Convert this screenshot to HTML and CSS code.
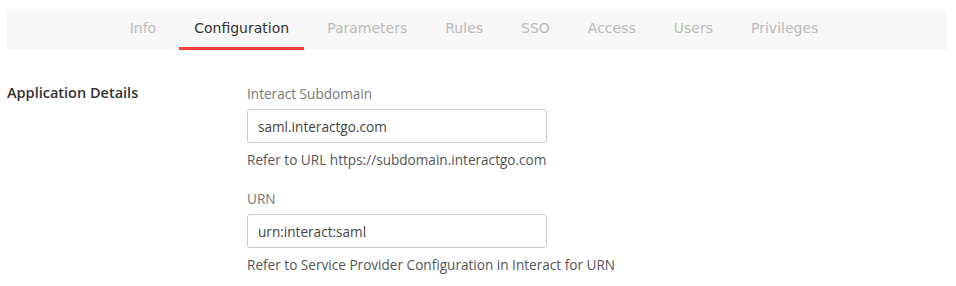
FILE: index.html
```html
<!DOCTYPE html>
<html lang="en">
<head>
    <meta charset="UTF-8">
    <meta name="viewport" content="width=device-width, initial-scale=1.0">
    <title>Application Configuration</title>
    <link rel="stylesheet" href="styles.css">
</head>
<body>
    <div class="page">
        <nav class="tabs">
            <a href="#" class="tab">Info</a>
            <a href="#" class="tab active">Configuration</a>
            <a href="#" class="tab">Parameters</a>
            <a href="#" class="tab">Rules</a>
            <a href="#" class="tab">SSO</a>
            <a href="#" class="tab">Access</a>
            <a href="#" class="tab">Users</a>
            <a href="#" class="tab">Privileges</a>
        </nav>

        <section class="section">
            <h3 class="section-title">Application Details</h3>
            <div class="fields">
                <div class="field">
                    <label for="subdomain">Interact Subdomain</label>
                    <input type="text" id="subdomain" value="saml.interactgo.com">
                    <p class="help">Refer to URL https://subdomain.interactgo.com</p>
                </div>
                <div class="field">
                    <label for="urn">URN</label>
                    <input type="text" id="urn" value="urn:interact:saml">
                    <p class="help">Refer to Service Provider Configuration in Interact for URN</p>
                </div>
            </div>
        </section>
    </div>
</body>
</html>
```

FILE: styles.css
```css
* {
    margin: 0;
    padding: 0;
    box-sizing: border-box;
}

body {
    background: #fff;
    font-family: "Open Sans", Arial, sans-serif;
    font-size: 13.6px;
    color: #333;
}

.page {
    padding: 10px 9px 0 7px;
}

.tabs {
    display: flex;
    justify-content: center;
    height: 40px;
    padding-right: 6px;
    background: #f7f7f7;
}

.tab {
    display: flex;
    align-items: center;
    padding: 0 15px 1px;
    margin: 0 4px;
    font-family: "DejaVu Sans", sans-serif;
    font-size: 14px;
    color: #bbb;
    text-decoration: none;
    border-bottom: 3px solid transparent;
}

.tab.active {
    color: #333;
    border-bottom-color: #f44336;
}

.section {
    display: grid;
    grid-template-columns: 240px 300px;
    padding-top: 34px;
}

.section-title {
    font-size: 14.5px;
    font-weight: 600;
    line-height: 18px;
    color: #333;
}

.field {
    margin-bottom: 20px;
}

.field label {
    display: block;
    line-height: 19px;
    margin-bottom: 6px;
    color: #777;
}

.field input {
    display: block;
    width: 300px;
    height: 34px;
    padding: 0 10px;
    font-family: inherit;
    font-size: 13.6px;
    color: #444;
    border: 1px solid #ccc;
    border-radius: 3px;
    outline: none;
}

.help {
    margin-top: 8px;
    line-height: 18px;
    color: #555;
    white-space: nowrap;
}
```
